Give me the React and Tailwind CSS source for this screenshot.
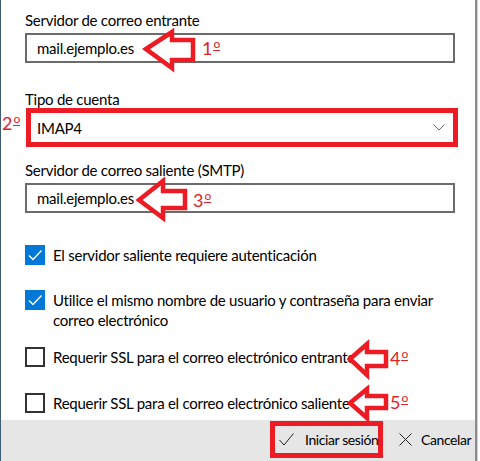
import React from 'react';

const RED = 'border-[#ed1c24]';

// red outlined arrow pointing left (annotation)
function Arrow({ className, w, h, points }) {
  return (
    <svg className={className} width={w} height={h} viewBox={`0 0 ${w} ${h}`} style={{ overflow: 'visible' }}>
      <polygon points={points} fill="white" stroke="#ed1c24" strokeWidth="4.5" strokeLinejoin="miter" />
    </svg>
  );
}

// "1º" style step number, ordinal drawn with an underline like the Segoe glyph
function Step({ className, n }) {
  return (
    <span className={`absolute flex items-start text-[18px] leading-5 tracking-normal text-[#de2329] ${className}`}>
      {n}
      <span className="ml-[1px] mt-px inline-block text-[12px] leading-[10px] pb-px border-b-[1.5px] border-[#de2329]">o</span>
    </span>
  );
}

function TextBox({ value }) {
  return (
    <div className="h-[30px] w-[430px] border-2 border-[#6b6b6b] bg-white px-[10px] flex items-center">
      <span className="leading-5">{value}</span>
    </div>
  );
}

function Checkbox({ checked }) {
  if (checked) {
    return (
      <div className="w-5 h-5 shrink-0 bg-[#0078d7] flex items-center justify-center">
        <svg width="20" height="20" viewBox="0 0 20 20">
          <path d="M4 10.5 L8 14.5 L16.5 5.5" fill="none" stroke="white" strokeWidth="1.4" />
        </svg>
      </div>
    );
  }
  return <div className="w-5 h-5 shrink-0 border-2 border-[#333333] bg-white" />;
}

function CheckRow({ checked, children, className = '' }) {
  return (
    <div className={`flex items-start gap-2 ${className}`}>
      <Checkbox checked={checked} />
      <span className="leading-5 w-[395px]">{children}</span>
    </div>
  );
}

export default function App() {
  return (
    <div
      className="relative flex h-[461px] w-[480px] overflow-hidden bg-white text-[15px] tracking-[-0.25px] text-black"
      style={{ fontFamily: 'Lato, "Noto Sans", sans-serif' }}
    >
      <div className="w-px bg-[#3f5d72]" />

      <div className="flex flex-col w-[476px] border-r-2 border-[#8c8c8c]">
        <div className="flex-1 pl-6 pt-[10px]">
          <div className="leading-5">Servidor de correo entrante</div>
          <div className="mt-[3px]">
            <TextBox value="mail.ejemplo.es" />
          </div>

          <div className="mt-[27px] leading-[18px]">Tipo de cuenta</div>
          <div className={`ml-px h-[39px] w-[432px] border-[5px] ${RED} bg-white flex items-center justify-between pl-[6px] pr-2`}>
            <span className="leading-5">IMAP4</span>
            <svg width="12" height="7" viewBox="0 0 12 7">
              <path d="M0.5 0.5 L6 6 L11.5 0.5" fill="none" stroke="#666" strokeWidth="1" />
            </svg>
          </div>

          <div className="mt-[13px] leading-5">Servidor de correo saliente (SMTP)</div>
          <div className="mt-[3px]">
            <TextBox value="mail.ejemplo.es" />
          </div>

          <CheckRow checked className="mt-8">El servidor saliente requiere autenticación</CheckRow>
          <CheckRow checked className="mt-[25px]">
            Utilice el mismo nombre de usuario y contraseña para enviar correo electrónico
          </CheckRow>
          <CheckRow className="mt-[17px]">Requerir SSL para el correo electrónico entrante</CheckRow>
          <CheckRow className="mt-[26px]">Requerir SSL para el correo electrónico saliente</CheckRow>
        </div>

        <div className="h-[41px] bg-[#e6e6e6] flex items-start justify-end text-[14px] tracking-[-0.4px]">
          <div className={`mt-px h-[37px] w-[113px] border-[5px] ${RED} flex items-center pl-1`}>
            <svg width="15" height="13" viewBox="0 0 15 13" className="shrink-0">
              <path d="M0.5 7 L5 12 L14.5 0.5" fill="none" stroke="#222" strokeWidth="1" />
            </svg>
            <span className="ml-[11px] leading-5 whitespace-nowrap">Iniciar sesión</span>
          </div>
          <div className="ml-4 w-[76px] h-[39px] flex items-center">
            <svg width="13" height="13" viewBox="0 0 13 13" className="shrink-0">
              <path d="M0.5 0.5 L12.5 12.5 M12.5 0.5 L0.5 12.5" fill="none" stroke="#222" strokeWidth="1" />
            </svg>
            <span className="ml-[9px] leading-5">Cancelar</span>
          </div>
        </div>
      </div>

      <div className="w-px bg-[#b8d8f0]" />

      {/* annotations */}
      <Arrow className="absolute left-[140px] top-[26px]" w={60} h={48}
        points="6,23 32,6 32,14 53,14 53,34 32,34 32,42" />
      <Step className="left-[202px] top-[38px]" n="1" />

      <Step className="left-[2px] top-[113px]" n="2" />

      <Arrow className="absolute left-[133px] top-[175px]" w={60} h={50}
        points="6,25 30,6 30,16 52,16 52,33 30,33 30,43" />
      <Step className="left-[193px] top-[190px]" n="3" />

      <Arrow className="absolute left-[344px] top-[338px]" w={50} h={44}
        points="6,21 23,6 23,14 42,14 42,28 23,28 23,37" />
      <Step className="left-[390px] top-[348px]" n="4" />

      <Arrow className="absolute left-[344px] top-[383px]" w={50} h={42}
        points="6,20 23,6 23,13 42,13 42,25 23,25 23,35" />
      <Step className="left-[390px] top-[392px]" n="5" />
    </div>
  );
}
